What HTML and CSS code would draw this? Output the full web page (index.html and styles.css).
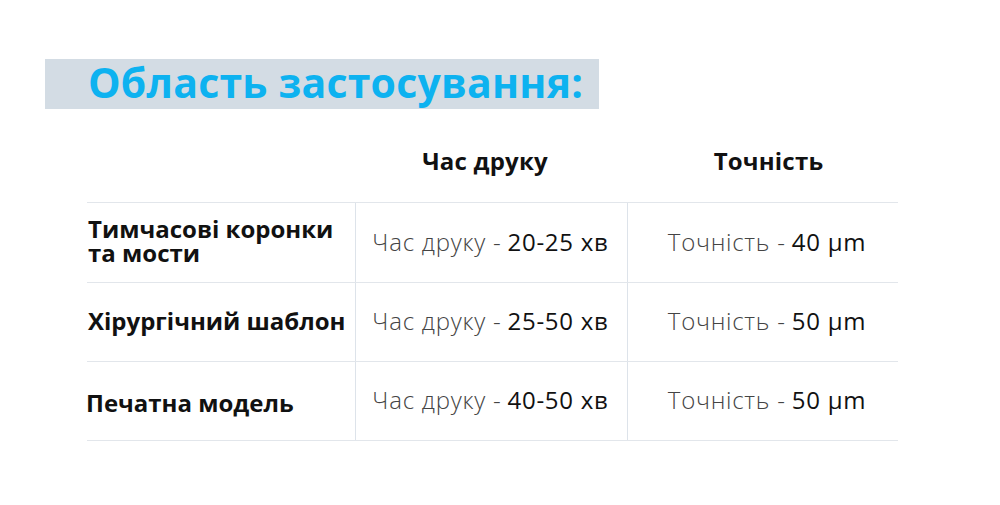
FILE: index.html
```html
<!DOCTYPE html>
<html lang="uk">
<head>
<meta charset="utf-8">
<link rel="stylesheet" href="styles.css">
</head>
<body>
<div class="page">
  <div class="banner"><h1 class="title">Область застосування:</h1></div>
  <div class="table">
    <div class="head-row">
      <div class="cell head-empty"></div>
      <div class="cell head head-time">Час друку</div>
      <div class="cell head head-acc">Точність</div>
    </div>
    <div class="row row-first">
      <div class="cell label">Тимчасові коронки<br>та мости</div>
      <div class="cell val col2"><span class="lt">Час друку -</span> 20-25 хв</div>
      <div class="cell val col3"><span class="lt">Точність -</span> 40 µm</div>
    </div>
    <div class="row">
      <div class="cell label">Хірургічний шаблон</div>
      <div class="cell val col2"><span class="lt">Час друку -</span> 25-50 хв</div>
      <div class="cell val col3"><span class="lt">Точність -</span> 50 µm</div>
    </div>
    <div class="row">
      <div class="cell label label-low">Печатна модель</div>
      <div class="cell val col2"><span class="lt">Час друку -</span> 40-50 хв</div>
      <div class="cell val col3"><span class="lt">Точність -</span> 50 µm</div>
    </div>
  </div>
</div>
</body>
</html>
```
FILE: styles.css
```css
html, body {
  margin: 0;
  padding: 0;
  background: #ffffff;
}
.page {
  width: 1000px;
  height: 505px;
  padding-top: 59px;
  box-sizing: border-box;
  font-family: "Open Sans", "DejaVu Sans", sans-serif;
}
.banner {
  margin-left: 45px;
  width: 554px;
  height: 50px;
  background: #d3dce4;
  display: flex;
  align-items: center;
}
.title {
  margin: 0 0 4px 43px;
  font-size: 41px;
  font-weight: 700;
  color: #0db2f0;
  letter-spacing: 0.2px;
  line-height: 1;
}
.table {
  margin-left: 87px;
  margin-top: 31px;
  width: 811px;
}
.head-row {
  display: grid;
  grid-template-columns: 268px 272px 271px;
  height: 62px;
}
.row {
  display: grid;
  grid-template-columns: 268px 272px 271px;
  height: 78px;
  border-top: 1px solid #e2e6eb;
}
.row-first {
  height: 79px;
}
.row:last-child {
  border-bottom: 1px solid #e2e6eb;
}
.cell {
  display: flex;
  align-items: center;
  box-sizing: border-box;
}
.head {
  justify-content: center;
  font-size: 24px;
  font-weight: 700;
  color: #111111;
  padding-bottom: 22px;
  letter-spacing: 0.2px;
}
.head-time {
  padding-right: 12px;
}
.head-acc {
  padding-left: 12px;
}
.label {
  font-size: 24px;
  font-weight: 700;
  color: #111111;
  line-height: 24px;
  padding-left: 1px;
  padding-bottom: 3px;
  white-space: nowrap;
}
.label-low {
  padding-top: 3px;
  padding-bottom: 0;
  padding-left: 0;
  margin-left: -1px;
}
.val {
  justify-content: center;
  font-size: 24px;
  color: #111111;
  border-left: 1px solid #dde3ea;
  letter-spacing: 0.75px;
  white-space: nowrap;
  padding-bottom: 3px;
}
.col2 {
  padding-right: 2px;
}
.col3 {
  padding-left: 8px;
}
.lt {
  color: #444444;
  font-weight: 300;
  margin-right: 6px;
}
```
